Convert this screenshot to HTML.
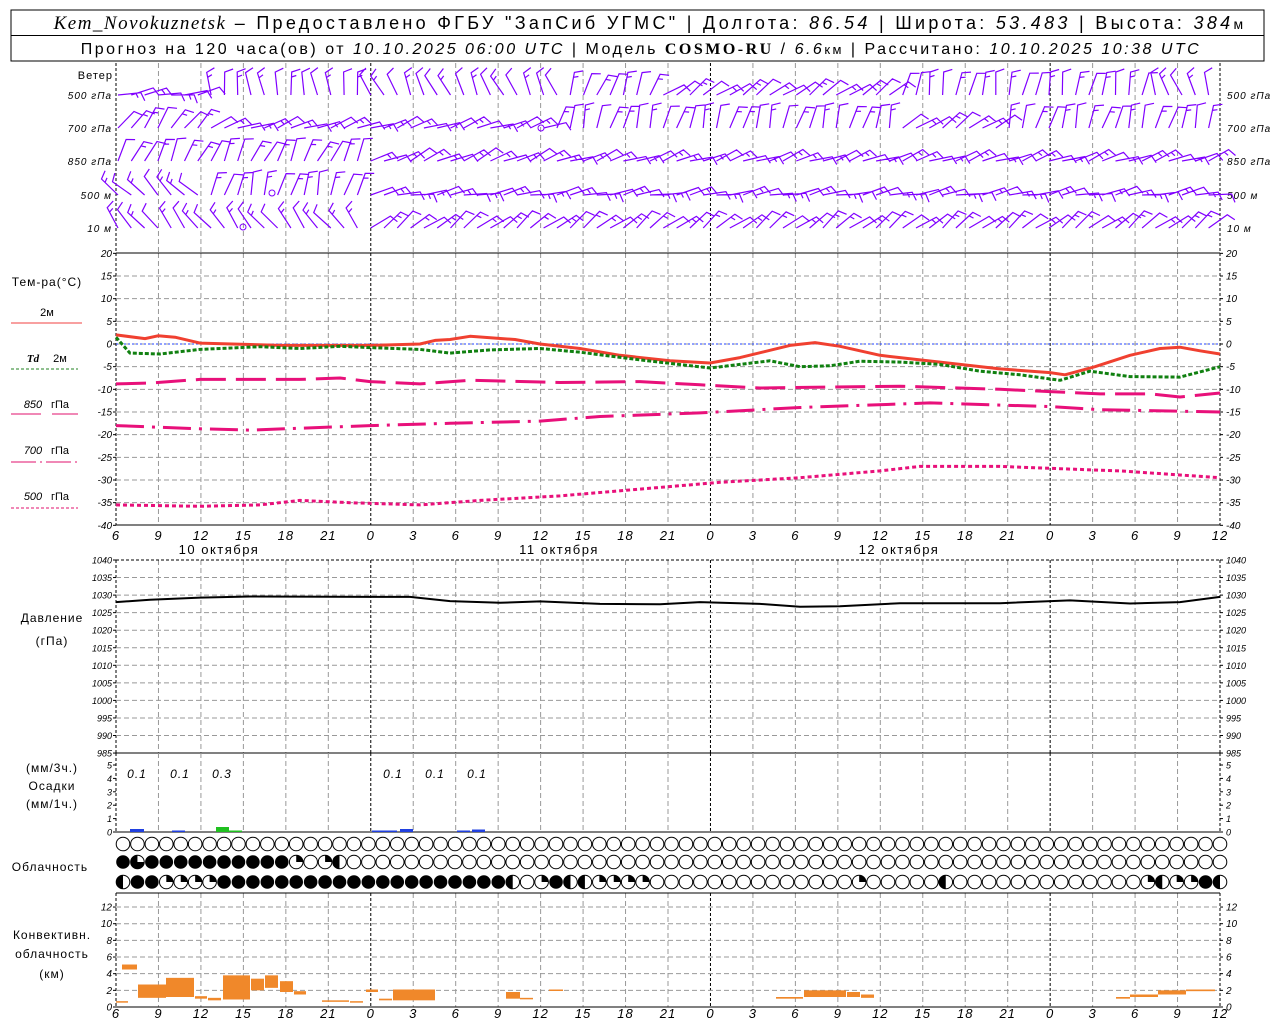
<!DOCTYPE html>
<html><head><meta charset="utf-8"><style>
html,body{margin:0;padding:0;background:#fff;width:1280px;height:1024px;overflow:hidden}
svg{display:block}
</style></head><body>
<svg id="s" width="1280" height="1024" xmlns="http://www.w3.org/2000/svg" font-family="Liberation Sans, DejaVu Sans, sans-serif">
<rect x="11" y="10" width="1253" height="51" fill="#fff" stroke="#000" stroke-width="1"/>
<line x1="11" y1="35.5" x2="1264" y2="35.5" stroke="#000"/>
<text x="650" y="29" text-anchor="middle" font-size="18" letter-spacing="3.3"><tspan font-family="Liberation Serif, serif" font-style="italic" font-size="19" letter-spacing="1.5">Kem_Novokuznetsk</tspan> – Предоставлено ФГБУ "ЗапСиб УГМС" | Долгота: <tspan font-style="italic">86.54</tspan> | Широта: <tspan font-style="italic">53.483</tspan> | Высота: <tspan font-style="italic">384</tspan><tspan font-size="14">м</tspan></text>
<text x="641" y="54" text-anchor="middle" font-size="16" letter-spacing="2.5">Прогноз на 120 часа(ов) от <tspan font-style="italic">10.10.2025 06:00 UTC</tspan> | Модель <tspan font-family="Liberation Serif, serif" font-weight="bold">COSMO-RU</tspan> / <tspan font-style="italic">6.6</tspan><tspan font-size="13">км</tspan> | Рассчитано: <tspan font-style="italic">10.10.2025 10:38 UTC</tspan></text>
<g id="g"></g>
</svg>
<script>
var g=document.getElementById('g'),o='';
var X0=116,X1=1220,DX=(X1-X0)/26;
function L(x1,y1,x2,y2,c,w,d){o+='<line x1="'+x1+'" y1="'+y1+'" x2="'+x2+'" y2="'+y2+'" stroke="'+c+'" stroke-width="'+(w||1)+'"'+(d?' stroke-dasharray="'+d+'"':'')+'/>';}
function T(x,y,t,s,a,it,c,ls){o+='<text x="'+x+'" y="'+y+'" font-size="'+s+'"'+(a?' text-anchor="'+a+'"':'')+(it?' font-style="italic"':'')+(c?' fill="'+c+'"':'')+(ls?' letter-spacing="'+ls+'"':'')+'>'+t+'</text>';}
function vgrid(y1,y2){for(var i=1;i<26;i++){var x=X0+i*DX;var m=(i==6||i==14||i==22);L(x,y1,x,y2,m?'#000':'#999',1,m?'3,2':'5,3');}L(X0,y1,X0,y2,'#000',1,'3,2');L(X1,y1,X1,y2,'#000',1,'3,2');}
function hgrid(y){L(X0,y,X1,y,'#999',1,'5,3');}
function yl(y,t,s){T(112,y+3.5,t,s||10,'end',1);T(1226,y+3.5,t,s||10,'start',1);L(X0-3,y,X0,y,'#000');L(X1,y,X1+3,y,'#000');}
vgrid(63,253);
T(113,79,'Ветер',11,'end',0,0,1);
var wr=[[95,'500 гПа'],[128,'700 гПа'],[161,'850 гПа'],[195,'500 м'],[228,'10  м']];
wr.forEach(function(r){T(112,r[0]+4,r[1],10,'end',1,0,1);T(1227,r[0]+4,r[1],10,'start',1,0,1);});
vgrid(253,525);
for(var t=20;t>=-40;t-=5){var y=344-t*4.533;if(t<20&&t>-40)hgrid(y);yl(y,t);}
L(X0,253,X1,253,'#000');L(X0,525,X1,525,'#000');
L(X0,344,X1,344,'#2040ff',1,'2,2');
T(47,286,'Тем-ра(°С)',12,'middle',0,0,1);
T(47,316,'2м',11,'middle');L(11,323,82,323,'#f04040');
T(33,362,'<tspan font-family="Liberation Serif" font-weight="bold">Td</tspan>',11,'middle',1);T(60,362,'2м',11,'middle');L(11,369,78,369,'#208020',1,'3,2');
T(33,408,'850',11,'middle',1);T(60,408,'гПа',11,'middle');L(11,414,78,414,'#e0106e',1,'30,11');
T(33,454,'700',11,'middle',1);T(60,454,'гПа',11,'middle');L(11,462,78,462,'#e0106e',1,'25,4,2,4');
T(33,500,'500',11,'middle',1);T(60,500,'гПа',11,'middle');L(11,508,78,508,'#e0106e',1,'3,2');
var hr=[6,9,12,15,18,21,0,3,6,9,12,15,18,21,0,3,6,9,12,15,18,21,0,3,6,9,12];
function hours(y){hr.forEach(function(h,i){T(X0+i*DX,y,h,13,'middle',1,0,1);});}
hours(540);
T(219,554,'10 октября',13,'middle',0,0,1.5);T(559,554,'11 октября',13,'middle',0,0,1.5);T(899,554,'12 октября',13,'middle',0,0,1.5);
vgrid(560,753);
for(var p=1040;p>=985;p-=5){var y=560+(1040-p)*3.51;if(p<1040&&p>985)hgrid(y);yl(y,p,9);}
L(X0,560,X1,560,'#000',1,'3,2');L(X0,753,X1,753,'#000');
T(52,622,'Давление',12,'middle',0,0,1);T(52,645,'(гПа)',12,'middle',0,0,1);
vgrid(753,832);
for(var k=0;k<=5;k++){var y=832-k*13.4;yl(y,k,9);}
L(X0,832,X1,832,'#000');
T(52,772,'(мм/3ч.)',12,'middle',0,0,1);T(52,790,'Осадки',12,'middle',0,0,1);T(52,808,'(мм/1ч.)',12,'middle',0,0,1);
[[137,'0.1'],[180,'0.1'],[222,'0.3'],[393,'0.1'],[435,'0.1'],[477,'0.1']].forEach(function(a){T(a[0],778,a[1],12,'middle',1,0,1);});
function R(x,y,w,h,c){o+='<rect x="'+x+'" y="'+y+'" width="'+w+'" height="'+h+'" fill="'+c+'"/>';}
R(130,829,14,3,'#2040e0');R(172,830.5,13,1.5,'#2040e0');R(216,827,13,5,'#20c020');R(229,830.5,13,1.5,'#20c020');
R(372,830.5,25,1.5,'#2040e0');R(400,829,13,3,'#2040e0');R(457,830.5,13,1.5,'#2040e0');R(472,829.5,13,2.5,'#2040e0');
T(50,871,'Облачность',12,'middle',0,0,1);
var r2='FTFFFFFFFFFFQEQH';
var r3={0:'H',1:'F',2:'F',3:'Q',4:'Q',5:'Q',6:'Q',27:'H',28:'E',29:'Q',30:'F',31:'H',32:'H',33:'Q',34:'Q',35:'Q',36:'Q',51:'Q',57:'H',71:'Q',72:'H',73:'Q',74:'Q',75:'F',76:'H'};
for(var i=7;i<27;i++)r3[i]='F';
function circ(cx,cy,tp){var r=6.8;
 if(tp=='F'){o+='<circle cx="'+cx+'" cy="'+cy+'" r="'+r+'" fill="#000"/>';return;}
 o+='<circle cx="'+cx+'" cy="'+cy+'" r="'+r+'" fill="#fff" stroke="#000"/>';
 if(tp=='H')o+='<path d="M'+cx+','+(cy-r)+' A'+r+','+r+' 0 0,0 '+cx+','+(cy+r)+'Z" fill="#000"/>';
 if(tp=='Q')o+='<path d="M'+cx+','+cy+' L'+cx+','+(cy-r)+' A'+r+','+r+' 0 0,1 '+(cx+r)+','+cy+'Z" fill="#000"/>';
 if(tp=='T')o+='<path d="M'+cx+','+cy+' L'+cx+','+(cy-r)+' A'+r+','+r+' 0 1,0 '+(cx+r)+','+cy+'Z" fill="#000"/>';}
var CS=(1220-123)/76;
for(var i=0;i<77;i++){var cx=123+i*CS;circ(cx,844,'E');circ(cx,862,r2[i]||'E');circ(cx,882,r3[i]||'E');}
vgrid(893,1007);
for(var k=0;k<=12;k+=2){var y=1007-k*8.33;if(k>0)hgrid(y);yl(y,k,10);}
L(X0,893,X1,893,'#000');L(X0,1007,X1,1007,'#000');
T(52,939,'Конвективн.',12,'middle',0,0,1);T(52,958,'облачность',12,'middle',0,0,1);T(52,978,'(км)',12,'middle',0,0,1);
var cb=[[116,128,0.6,0.7],[122,137,4.5,5.1],[138,166,1.1,2.7],[166,194,1.2,3.5],[195,207,1.0,1.3],[208,221,0.8,1.1],[223,250,0.9,3.8],[251,264,2.0,3.4],[265,278,2.3,3.8],[280,293,1.8,3.1],[294,306,1.5,1.9],[322,349,0.7,0.8],[350,363,0.6,0.7],[366,378,1.8,2.1],[379,392,0.8,1.0],[393,435,0.8,2.1],[506,520,1.0,1.8],[520,533,1.0,1.1],[549,563,2.0,2.1],[776,803,1.0,1.2],[804,846,1.2,2.0],[847,860,1.2,1.8],[861,874,1.1,1.5],[1116,1130,1.0,1.2],[1130,1158,1.2,1.5],[1158,1186,1.5,2.0],[1186,1215,1.9,2.1]];
cb.forEach(function(b){R(b[0],1007-b[3]*8.33,b[1]-b[0],Math.max(1.5,(b[3]-b[2])*8.33),'#f0882a');});
hours(1018);
function P(pts,f,c,w,d){var s='';pts.forEach(function(p,i){s+=(i?'L':'M')+p[0]+','+f(p[1]).toFixed(1);});o+='<path d="'+s+'" fill="none" stroke="'+c+'" stroke-width="'+w+'"'+(d?' stroke-dasharray="'+d+'"':'')+' stroke-linejoin="round"/>';}
function ty(t){return 344-t*4.533;}
P([[116,2],[145,1.2],[158,1.8],[175,1.5],[200,0.2],[280,-0.3],[370,-0.3],[420,0],[435,0.8],[450,1],[470,1.7],[515,1],[540,0],[580,-1],[620,-2.5],[670,-3.7],[710,-4.2],[740,-3],[790,-0.3],[815,0.3],[840,-0.5],[880,-2.5],[920,-3.5],[960,-4.5],[1000,-5.5],[1050,-6.3],[1065,-6.8],[1095,-5],[1130,-2.5],[1160,-1],[1180,-0.7],[1200,-1.5],[1220,-2.2]],ty,'#f04030',3);
P([[116,1.5],[130,-2],[160,-2.2],[200,-1.2],[260,-0.6],[300,-1],[340,-0.5],[370,-0.8],[420,-1.2],[450,-2],[490,-1.3],[540,-1],[580,-1.8],[640,-3.5],[710,-5.3],[740,-4.5],[770,-3.7],[800,-5],[830,-4.8],[860,-3.8],[900,-4],[940,-4.5],[980,-6],[1020,-6.8],[1060,-8],[1090,-6],[1130,-7.2],[1180,-7.3],[1220,-5]],ty,'#108010',3,'4,2');
P([[116,-8.8],[150,-8.6],[200,-7.8],[300,-7.8],[340,-7.5],[370,-8.3],[420,-8.8],[470,-8],[560,-8.5],[640,-8.3],[700,-9],[760,-9.7],[900,-9.3],[1000,-10],[1050,-10.5],[1100,-11],[1150,-11],[1180,-11.7],[1220,-10.8]],ty,'#e8107a',3,'30,10');
P([[116,-18],[200,-18.7],[250,-19],[370,-18],[450,-17.5],[540,-17],[600,-16],[700,-15.2],[800,-14],[930,-13],[1050,-13.8],[1100,-14.5],[1220,-15]],ty,'#e8107a',3,'28,8,3,8');
P([[116,-35.5],[200,-35.8],[260,-35.5],[300,-34.5],[350,-35],[420,-35.5],[480,-34.5],[560,-33.5],[640,-32],[720,-30.5],[800,-29.5],[880,-28],[920,-27],[1000,-27],[1060,-27.5],[1120,-28],[1220,-29.5]],ty,'#e8107a',3,'4,3');
P([[116,1028],[150,1028.7],[200,1029.3],[250,1029.6],[370,1029.5],[410,1029.5],[450,1028.3],[500,1027.8],[540,1028.2],[600,1027.5],[660,1027.4],[700,1028],[760,1027.5],[800,1026.7],[840,1026.8],[900,1027.7],[1000,1027.7],[1070,1028.5],[1130,1027.6],[1180,1028],[1220,1029.5]],function(p){return 560+(1040-p)*3.51;},'#000',2);
var regs={95:[[200,80],[370,-8],[560,-25],[650,20],[900,55],[1150,10],[1230,-20]],
128:[[200,35],[545,70],[700,15],[900,15],[1000,55],[1230,15]],
161:[[370,25],[540,65],[700,70],[1230,70]],
195:[[200,-45],[370,15],[1230,78]],
228:[[370,-38],[1230,52]]};
var bo='';
for(var ry in regs){var y=+ry;var rg=regs[ry];
 for(var x=118;x<=1220;x+=13.3){var a=0;for(var j=0;j<rg.length;j++){if(x<=rg[j][0]){a=rg[j][1];break;}}
  var jit=Math.sin(x*0.37+y)*10;a+=jit;var rad=a*Math.PI/180,Ln=23;
  var ex=x+Math.sin(rad)*Ln,ey=y-Math.cos(rad)*Ln;
  var fr=(a+70)*Math.PI/180;
  var fx=ex+Math.sin(fr)*9,fy=ey-Math.cos(fr)*9;
  var mx=x+Math.sin(rad)*(Ln-5),my=y-Math.cos(rad)*(Ln-5);
  bo+='M'+x.toFixed(1)+','+y+'L'+ex.toFixed(1)+','+ey.toFixed(1)+'L'+fx.toFixed(1)+','+fy.toFixed(1);
  if(Math.cos(x*0.21+y)>0)bo+='M'+mx.toFixed(1)+','+my.toFixed(1)+'l'+(Math.sin(fr)*5).toFixed(1)+','+(-Math.cos(fr)*5).toFixed(1);
 }}
o+='<path d="'+bo+'" fill="none" stroke="#8000ff" stroke-width="1.2"/>';
o+='<circle cx="541" cy="128" r="3" fill="none" stroke="#8000ff"/><circle cx="272" cy="193" r="3" fill="none" stroke="#8000ff"/><circle cx="243" cy="227" r="3" fill="none" stroke="#8000ff"/>';
g.innerHTML=o;
</script>
</body></html>
